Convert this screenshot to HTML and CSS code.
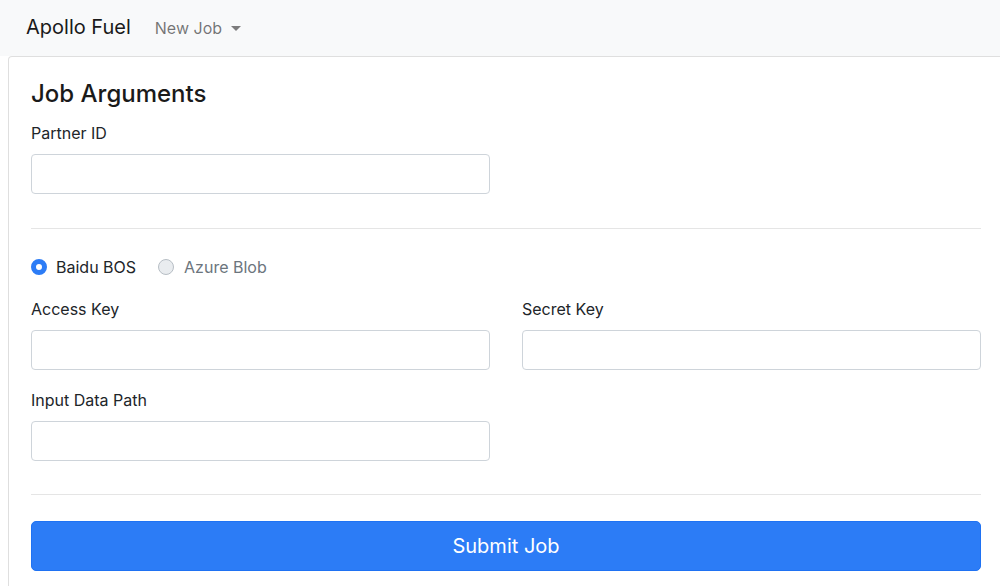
FILE: index.html
```html
<!DOCTYPE html>
<html>
<head>
<meta charset="utf-8">
<link rel="stylesheet" href="styles.css">
</head>
<body>
<nav class="navbar">
  <span class="brand">Apollo Fuel</span>
  <span class="nav-item">New Job <span class="caret"></span></span>
</nav>
<div class="page">
  <div class="card">
    <h4 class="title">Job Arguments</h4>
    <div class="row">
      <div class="field">
        <label class="label">Partner ID</label>
        <input class="input" type="text">
      </div>
      <div></div>
    </div>
    <hr class="rule rule-1">
    <div class="radios">
      <label class="radio"><span class="dot dot-on"></span>Baidu BOS</label>
      <label class="radio radio-off"><span class="dot"></span>Azure Blob</label>
    </div>
    <div class="row row-keys">
      <div class="field">
        <label class="label">Access Key</label>
        <input class="input" type="text">
      </div>
      <div class="field">
        <label class="label">Secret Key</label>
        <input class="input" type="text">
      </div>
    </div>
    <div class="row row-path">
      <div class="field">
        <label class="label">Input Data Path</label>
        <input class="input" type="text">
      </div>
      <div></div>
    </div>
    <hr class="rule rule-2">
    <button class="submit">Submit Job</button>
  </div>
</div>
</body>
</html>
```

FILE: styles.css
```css
html, body {
  margin: 0;
  padding: 0;
  background: #ffffff;
  font-family: "Inter", "Liberation Sans", Arial, sans-serif;
  color: #212529;
  font-size: 16px;
  line-height: 24px;
}

.navbar {
  height: 56px;
  background: #f8f9fa;
  display: flex;
  align-items: center;
  padding-left: 26px;
  box-sizing: border-box;
}

.brand {
  font-size: 20px;
  color: #1a1a1a;
  margin-right: 24px;
  position: relative;
  top: -1px;
}

.nav-item {
  color: rgba(0, 0, 0, 0.55);
  display: flex;
  align-items: center;
}

.caret {
  display: inline-block;
  width: 0;
  height: 0;
  margin-left: 9px;
  border-left: 5px solid transparent;
  border-right: 5px solid transparent;
  border-top: 5px solid rgba(0, 0, 0, 0.5);
}

.page {
  padding-left: 8px;
}

.card {
  border: 1px solid rgba(0, 0, 0, 0.125);
  border-right: none;
  border-radius: 4px 0 0 4px;
  padding: 22px 19px 40px 22px;
}

.title {
  margin: 0 0 13px 0;
  font-size: 24px;
  line-height: 29px;
  font-weight: 500;
  color: #1a1a1a;
}

.row {
  display: grid;
  grid-template-columns: 1fr 1fr;
  column-gap: 32px;
}

.field {
  display: flex;
  flex-direction: column;
}

.label {
  margin-bottom: 9px;
  color: #212529;
}

.input {
  height: 40px;
  box-sizing: border-box;
  border: 1px solid #ced4da;
  border-radius: 4px;
  background: #fff;
  font-family: inherit;
  font-size: 16px;
  padding: 6px 12px;
  margin: 0;
}

.rule {
  border: 0;
  border-top: 1px solid rgba(0, 0, 0, 0.1);
  margin: 0;
}

.rule-1 {
  margin-top: 34px;
  margin-bottom: 26px;
}

.radios {
  display: flex;
  gap: 22px;
  margin-bottom: 18px;
}

.radio {
  display: flex;
  align-items: center;
}

.radio-off {
  color: #6c757d;
}

.radio-off .dot {
  margin-right: 10px;
}

.dot {
  width: 16px;
  height: 16px;
  box-sizing: border-box;
  border-radius: 50%;
  margin-right: 9px;
  background: #e9ecef;
  border: 1px solid #b7bec5;
}

.dot-on {
  border: 5px solid #2c7cf6;
  background-color: #ffffff;
}

.row-keys {
  margin-bottom: 18px;
}

.rule-2 {
  margin-top: 33px;
  margin-bottom: 26px;
}

.submit {
  display: block;
  width: 100%;
  height: 50px;
  background: #2c7cf6;
  border: 1px solid #1f72f3;
  border-radius: 5px;
  color: #ffffff;
  font-family: inherit;
  font-size: 20px;
  padding: 0;
}
```
